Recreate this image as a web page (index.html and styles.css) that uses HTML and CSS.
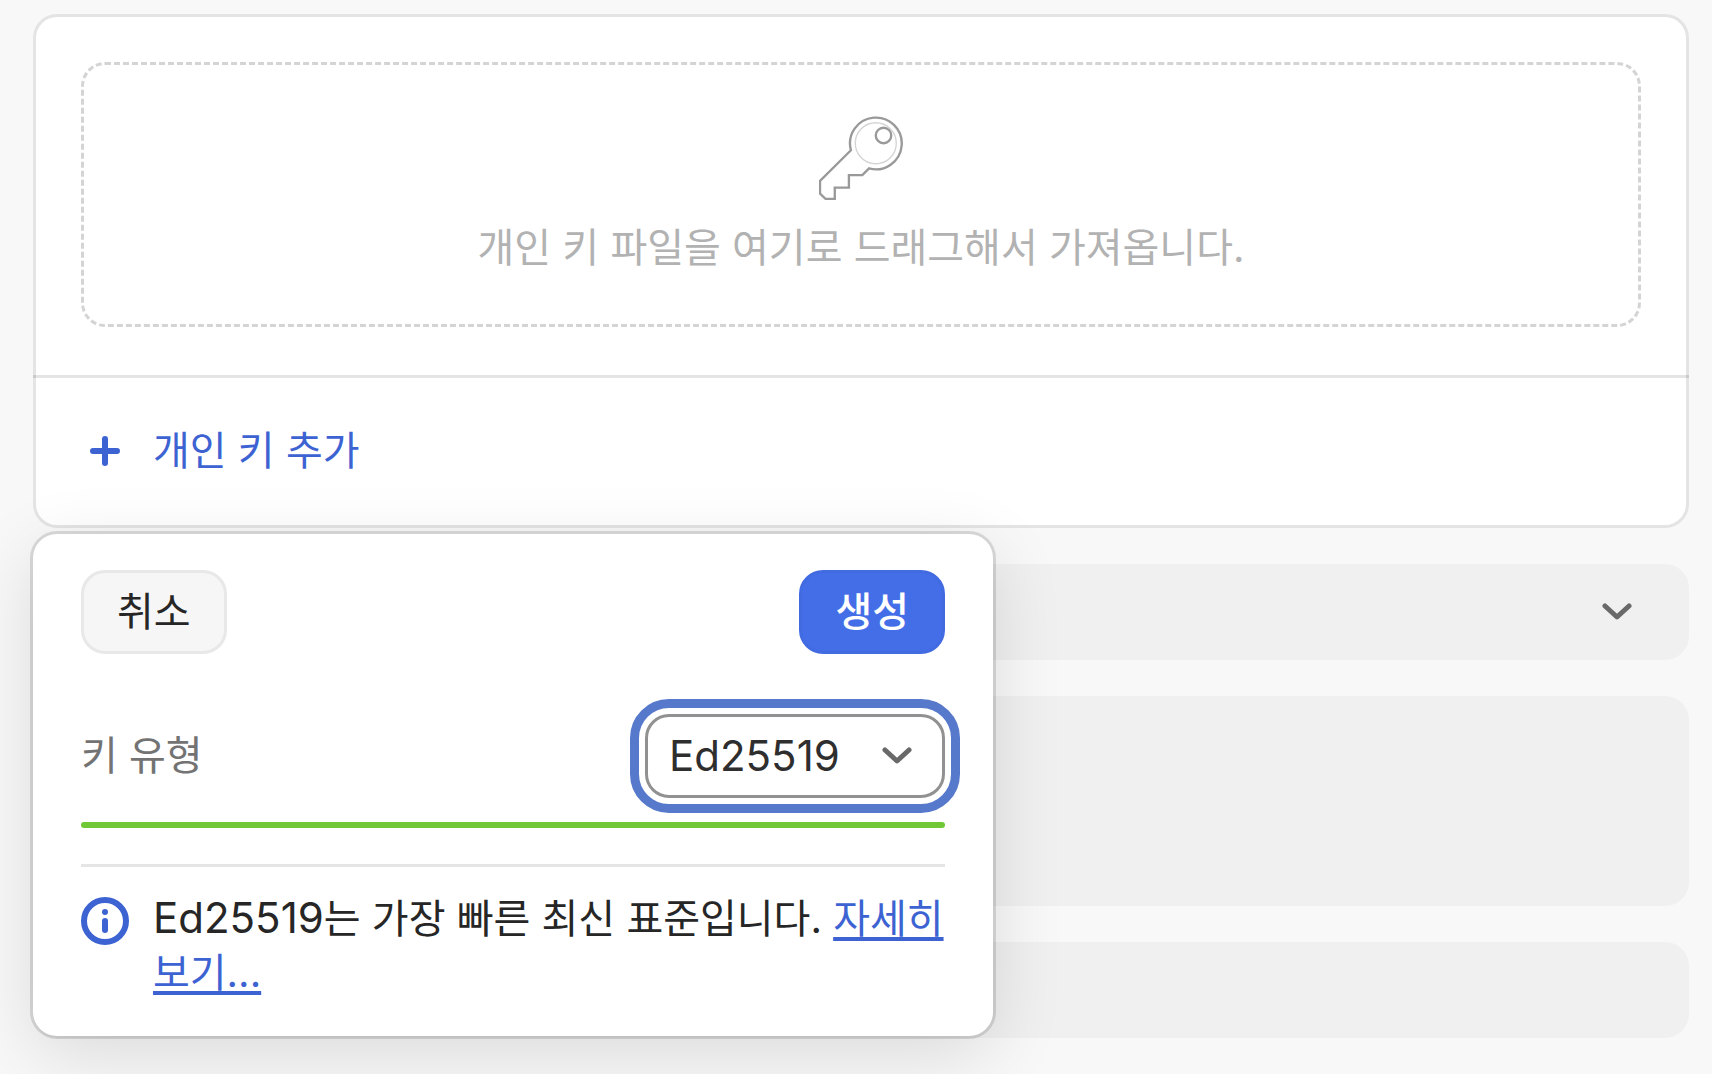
FILE: index.html
```html
<!DOCTYPE html>
<html lang="ko">

<head>
    <meta charset="utf-8">
    <title>개인 키</title>
    <link rel="stylesheet" href="styles.css">
</head>

<body>

    <main class="page">
        <section class="key-card">
            <div class="key-import">
                <div class="drop-zone">
                    <svg class="key-icon" viewBox="118 78 250 250" fill="none" stroke="#999" stroke-width="7">
                        <path d="M213 180 A77 77 0 1 1 267 234 L247 254 H207 V291 H165 V325 H138 L121 309 V271 Z" />
                        <circle cx="287" cy="159" r="61" stroke="#d4d4d4" stroke-width="4" />
                        <circle cx="310" cy="136" r="23" />
                    </svg>
                    <p class="drop-text">개인 키 파일을 여기로 드래그해서 가져옵니다.</p>
                </div>
            </div>
            <button type="button" class="add-btn">
                <svg class="plus-icon" viewBox="0 0 30 30" stroke="currentColor" stroke-width="6" stroke-linecap="round">
                    <path d="M15 3V27M3 15H27" />
                </svg>
                개인 키 추가
            </button>

            <form class="popover">
                <div class="popover-actions">
                    <button type="button" class="btn">취소</button>
                    <button type="button" class="btn btn-primary">생성</button>
                </div>
                <div class="field">
                    <label for="key-type">키 유형</label>
                    <div class="select-box">
                        <select id="key-type">
                            <option>Ed25519</option>
                            <option>RSA</option>
                        </select>
                        <svg class="chevron" viewBox="0 0 30 18" fill="none" stroke="currentColor" stroke-width="5" stroke-linecap="round" stroke-linejoin="round">
                            <path d="M3 3L15 14L27 3" />
                        </svg>
                    </div>
                </div>
                <div class="strength"></div>
                <div class="info">
                    <svg class="info-icon" viewBox="0 0 48 48" fill="none" stroke="currentColor" stroke-width="6" stroke-linecap="round">
                        <circle cx="24" cy="24" r="21" />
                        <circle cx="24" cy="15" r="3" fill="currentColor" stroke="none" />
                        <path d="M24 24V33" />
                    </svg>
                    <p class="info-text"><span class="latin">Ed25519</span>는 가장 빠른 최신 표준입니다. <a href="#">자세히 보기...</a></p>
                </div>
            </form>
        </section>

        <section class="panel panel-select">
            <svg class="chevron" viewBox="0 0 30 18" fill="none" stroke="currentColor" stroke-width="5" stroke-linecap="round" stroke-linejoin="round">
                <path d="M3 3L15 14L27 3" />
            </svg>
        </section>
        <section class="panel panel-tall"></section>
        <section class="panel"></section>
    </main>

</body>

</html>
```
FILE: styles.css
```css
* {
    box-sizing: border-box;
}

body {
    margin: 0;
    background-color: #f8f8f8;
    color: #262626;
    font-family: Inter, "Noto Sans CJK KR", sans-serif;
    font-size: 40px;
    line-height: 54px;
}

p {
    margin: 0;
}

button,
select {
    font: inherit;
    color: inherit;
    cursor: pointer;
}

svg {
    display: block;
    flex: none;
}

.page {
    display: flex;
    flex-direction: column;
    gap: 36px;
    padding: 14px 23px 36px 33px;
}

/* key card */
.key-card {
    position: relative;
    border: 3px solid rgba(0, 0, 0, 0.106);
    border-radius: 24px;
    background-color: #fff;
}

.key-import {
    margin: 0 -3px;
    padding: 45px 48px 48px;
    border-bottom: 3px solid rgba(0, 0, 0, 0.106);
}

.drop-zone {
    display: flex;
    flex-direction: column;
    align-items: center;
    gap: 21px;
    padding: 51px 24px 49px;
    border: 3px dashed #d4d4d4;
    border-radius: 24px;
}

.key-icon {
    width: 84px;
    height: 84px;
}

.drop-text {
    color: #b2b2b2;
}

.add-btn {
    display: flex;
    align-items: center;
    gap: 33px;
    width: 100%;
    height: 147px;
    padding: 0 54px 2px;
    border: none;
    background: none;
    color: #3d63d2;
}

.plus-icon {
    width: 30px;
    height: 30px;
}

/* popover with the new key options */
.popover {
    position: absolute;
    top: calc(100% + 9px);
    left: -3px;
    width: 960px;
    padding: 36px 48px;
    border-radius: 24px;
    background-color: #fff;
    box-shadow: 0 0 0 3px rgba(0, 0, 0, 0.12), 0 18px 72px rgba(0, 0, 0, 0.12);
}

.popover-actions,
.field {
    display: flex;
    align-items: center;
    justify-content: space-between;
}

.btn {
    height: 84px;
    padding: 0 33px;
    border: 3px solid #e8e8e8;
    border-radius: 24px;
    background-color: #f6f6f6;
}

.btn-primary {
    border-color: #426be1;
    background-color: #446ee7;
    color: #fff;
    font-weight: 500;
}

.field {
    margin-top: 60px;
    color: #737373;
}

.select-box {
    display: grid;
    align-items: center;
    width: 300px;
}

.select-box select {
    grid-area: 1 / 1;
    height: 84px;
    padding: 0 21px;
    appearance: none;
    border: 3px solid #919191;
    border-radius: 24px;
    outline: 9px solid #5679cc;
    outline-offset: 6px;
    background-color: #fff;
    color: #2e2e2e;
    font-size: 42px;
}

.chevron {
    width: 30px;
    height: 18px;
    color: #696969;
}

.select-box .chevron {
    grid-area: 1 / 1;
    justify-self: end;
    margin-right: 33px;
    pointer-events: none;
}

.strength {
    height: 6px;
    margin-top: 24px;
    border-radius: 3px;
    background-color: #70c837;
}

.info {
    display: flex;
    gap: 24px;
    margin-top: 36px;
    padding-top: 24px;
    border-top: 3px solid #e5e5e5;
}

.info-icon {
    width: 48px;
    height: 48px;
    margin-top: 6px;
    color: #3d63d2;
}

.latin {
    font-size: 42px;
}

.info-text a {
    color: #3d63d2;
    text-decoration-thickness: 4px;
    text-underline-offset: 4px;
    text-decoration-skip-ink: none;
}

/* panels under the card */
.panel {
    height: 96px;
    border-radius: 24px;
    background-color: #f0f0f0;
}

.panel-select {
    display: flex;
    align-items: center;
    justify-content: flex-end;
    padding: 0 57px;
}

.panel-tall {
    height: 210px;
}
```
